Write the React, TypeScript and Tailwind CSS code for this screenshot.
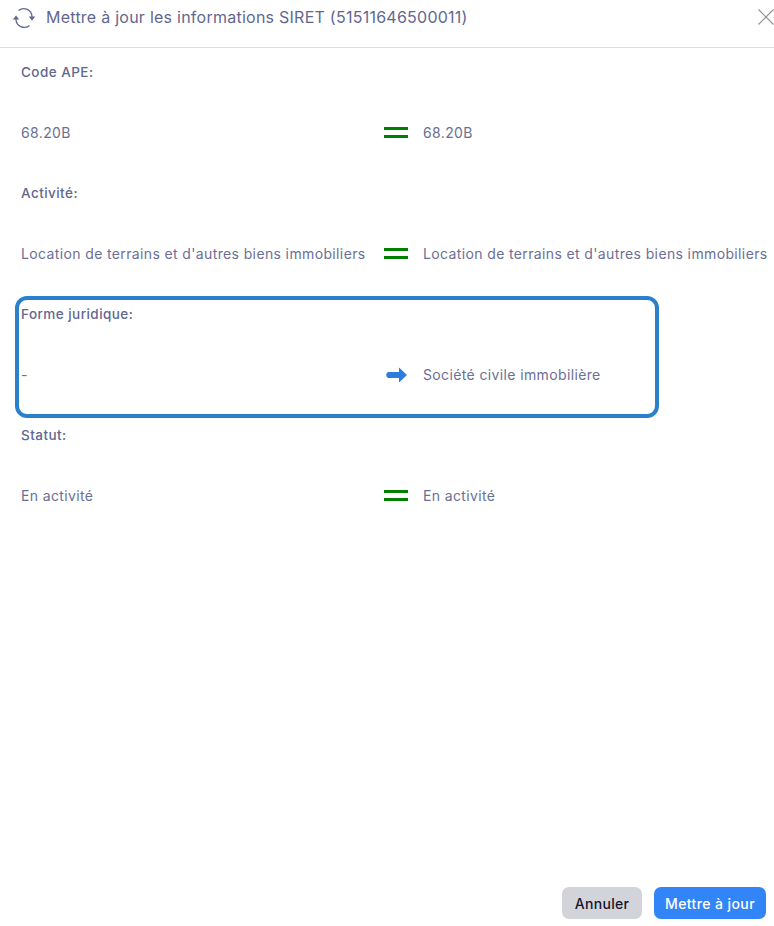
const font = "font-['Inter','Liberation_Sans',sans-serif]";

function EqualIcon() {
  return (
    <span className="flex w-6 flex-col gap-[5px]">
      <span className="h-[3px] bg-[#008000]" />
      <span className="h-[3px] bg-[#008000]" />
    </span>
  );
}

function ArrowIcon() {
  return (
    <svg width="22" height="16" viewBox="0 0 22 16" fill="#2f7bdf" className="ml-[2px]">
      <path d="M2.5 5H13V0.5L21 8L13 15.5V11H2.5C-0.5 11 -0.5 5 2.5 5Z" />
    </svg>
  );
}

function Row({
  label,
  before,
  after,
  changed,
}: {
  label: string;
  before: string;
  after: string;
  changed?: boolean;
}) {
  return (
    <div className="relative pl-[21px]">
      {changed && (
        <div className="pointer-events-none absolute left-[15px] top-[6px] h-[122px] w-[644px] rounded-[12px] border-[4px] border-[#2a80cb]" />
      )}
      <div className="flex h-[48px] items-center text-[13.5px] font-medium tracking-[0.45px] text-[#62678f]">
        {label}
      </div>
      <div className="flex h-[73px] items-center text-[14px] tracking-[0.37px] text-[#6b6f95]">
        <span className="w-[363px] whitespace-nowrap">{before}</span>
        <span className="flex w-[39px] shrink-0">
          {changed ? <ArrowIcon /> : <EqualIcon />}
        </span>
        <span className="whitespace-nowrap">{after}</span>
      </div>
    </div>
  );
}

export default function App() {
  return (
    <div className={`flex h-[926px] w-[774px] flex-col overflow-hidden bg-white ${font}`}>
      <header className="flex h-[48px] shrink-0 items-start border-b border-[#dedede] pl-[12px] pt-[7px]">
        <svg width="24" height="22" viewBox="0 0 24 22" fill="none" stroke="#62678f" strokeWidth="1.3">
          <path d="M20 10A8.2 8.2 0 0 0 6.5 3.6" />
          <path d="M4 12A8.2 8.2 0 0 0 17.5 18.4" />
          <path d="M0.8 12.5H7.2L4 8.4Z" fill="#62678f" stroke="none" />
          <path d="M16.8 9.6H23.2L20 13.7Z" fill="#62678f" stroke="none" />
        </svg>
        <h1 className="ml-[10px] whitespace-nowrap text-[16px] font-normal leading-[20px] tracking-[0.25px] text-[#62678f]">
          Mettre à jour les informations SIRET (51511646500011)
        </h1>
        <svg width="16" height="16" viewBox="0 0 16 16" stroke="#8f8f8f" strokeWidth="1.1" className="ml-auto mt-[2px]">
          <path d="M0.5 0.5L15.5 15.5M15.5 0.5L0.5 15.5" />
        </svg>
      </header>

      <main className="flex-1">
        <Row label="Code APE:" before="68.20B" after="68.20B" />
        <Row
          label="Activité:"
          before="Location de terrains et d'autres biens immobiliers"
          after="Location de terrains et d'autres biens immobiliers"
        />
        <Row label="Forme juridique:" before="-" after="Société civile immobilière" changed />
        <Row label="Statut:" before="En activité" after="En activité" />
      </main>

      <footer className="flex justify-end gap-3 pb-[7px] pr-2">
        <button className="h-8 w-[80px] rounded-[7px] bg-[#d3d4da] text-[14px] font-medium tracking-[0.3px] text-[#14142b]">
          Annuler
        </button>
        <button className="h-8 w-[112px] rounded-[7px] bg-[#3285f6] text-[14px] font-medium tracking-[0.4px] text-white">
          Mettre à jour
        </button>
      </footer>
    </div>
  );
}
